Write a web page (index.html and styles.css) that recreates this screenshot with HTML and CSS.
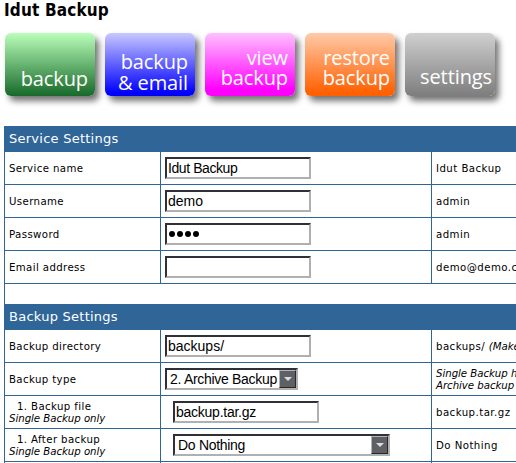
FILE: index.html
```html
<!DOCTYPE html>
<html lang="en">
<head>
<meta charset="utf-8">
<title>Idut Backup</title>
<link rel="stylesheet" href="styles.css">
</head>
<body>
<h1>Idut Backup</h1>
<nav class="actions">
  <a class="action green">backup</a>
  <a class="action blue">backup<br><span class="email">&amp; email</span></a>
  <a class="action pink">view<br>backup</a>
  <a class="action orange">restore<br>backup</a>
  <a class="action gray">settings</a>
</nav>
<main class="settings">
  <h2>Service Settings</h2>
  <div class="row"><div>Service name</div><div><span class="field tight">Idut Backup</span></div><div>Idut Backup</div></div>
  <div class="row"><div>Username</div><div><span class="field">demo</span></div><div>admin</div></div>
  <div class="row"><div>Password</div><div><span class="field dots"><i></i><i></i><i></i><i></i></span></div><div>admin</div></div>
  <div class="row"><div>Email address</div><div><span class="field"></span></div><div>demo@demo.com</div></div>
  <div class="spacer"></div>
  <h2>Backup Settings</h2>
  <div class="row"><div>Backup directory</div><div><span class="field">backups/</span></div><div><p>backups/ <em>(Make sure)</em></p></div></div>
  <div class="row"><div>Backup type</div><div><span class="field select type">2. Archive Backup<b></b></span></div><div><p><em>Single Backup here<br>Archive backup</em></p></div></div>
  <div class="row"><div><p><span class="sub">1. Backup file</span><br><em>Single Backup only</em></p></div><div class="inset"><span class="field file">backup.tar.gz</span></div><div>backup.tar.gz</div></div>
  <div class="row"><div><p><span class="sub">1. After backup</span><br><em>Single Backup only</em></p></div><div class="inset"><span class="field select after">Do Nothing<b></b></span></div><div>Do Nothing</div></div>
  <div class="row last"><div></div><div></div><div></div></div>
</main>
</body>
</html>
```
FILE: styles.css
```css
* { box-sizing: border-box; }
html, body { height: 100%; overflow: hidden; }
body { margin: 0; background: #fff; color: #000; font: 10.2px/12px Verdana, "DejaVu Sans", sans-serif; letter-spacing: .38px; }
h1 { margin: 0; padding: 0 0 0 4px; height: 33px; font: bold 17px/20px "DejaVu Sans Condensed", "DejaVu Sans", sans-serif; font-stretch: condensed; letter-spacing: .15px; }
.actions { display: flex; gap: 10px; padding-left: 5px; height: 93px; letter-spacing: 0; }
.action { flex: none; width: 90px; height: 63px; border-radius: 6px; box-shadow: 4px 5px 6px rgba(0, 0, 0, .55); color: #fff; font: 500 20px/20px "Open Sans", sans-serif; text-align: right; padding: 15px 7px 0 0; letter-spacing: -.1px; }
.green { background: linear-gradient(#b9ffb9, #17692a); padding-top: 36px; }
.blue { background: linear-gradient(#c8c8ff, #0000ff 95%); padding-top: 18px; line-height: 21px; }
.pink { background: linear-gradient(#ffc0ff, #ff00ff 90%); }
.orange { background: linear-gradient(#ffcaa8, #ff6000 95%); padding-right: 5px; }
.gray { background: linear-gradient(#d0d0d0, #7d7d7d); padding-top: 34px; padding-right: 3px; }
.settings { margin-left: 4px; border-left: 1px solid #306598; }
h2 { margin: 0; height: 26px; padding-left: 4px; background: #306598; color: #fff; font: 13px/26px Verdana, "DejaVu Sans", sans-serif; letter-spacing: .25px; }
.row { display: grid; grid-template-columns: 155px 271px minmax(0, 1fr); height: 33px; border-bottom: 1px solid #306598; }
.row > div { display: flex; align-items: center; padding-left: 4px; border-left: 1px solid #306598; white-space: nowrap; }
.row > div:first-child { border-left: 0; padding-top: 2px; }
.row > div:last-child { padding-top: 2px; letter-spacing: .45px; }
.row > .inset { padding-left: 12px; }
.last { height: 1px; border-bottom: 0; }
p { margin: 0; }
em { letter-spacing: -.04px; }
.sub { padding-left: 8px; }
.spacer { height: 20px; }
.field { position: relative; display: block; width: 146px; height: 22px; padding-left: 1px; border: 2px solid; border-color: #303038 #b0b0b0 #b0b0b0 #303038; font: 14px/19px "Liberation Sans", Arial, sans-serif; letter-spacing: 0; }
.tight { letter-spacing: -.42px; }
.file { letter-spacing: -.25px; }
.dots { display: flex; align-items: center; gap: 2px; padding-left: 2px; }
.dots i { width: 6px; height: 6px; border-radius: 50%; background: #000; }
.select { padding-left: 3px; letter-spacing: -.3px; }
.type { width: 133px; }
.after { width: 217px; }
.select b { position: absolute; right: 0; top: 0; width: 17px; height: 18px; background: #5e6066; border: 1px solid; border-color: #b4b4b8 #28282c #28282c #b4b4b8; }
.select b::after { content: ""; position: absolute; left: 4px; top: 6px; border: 4px solid transparent; border-top-color: #ddd; border-bottom: 0; }
```
